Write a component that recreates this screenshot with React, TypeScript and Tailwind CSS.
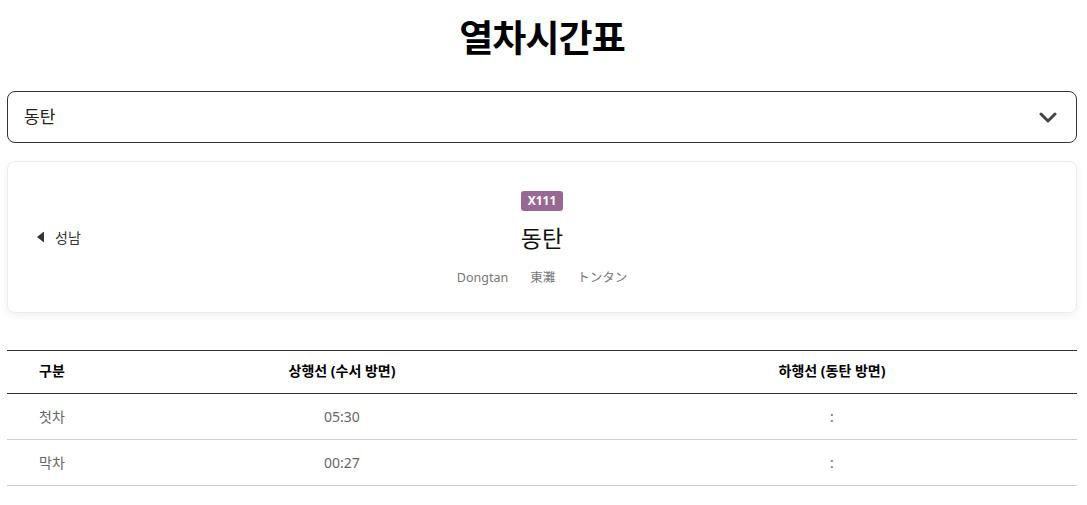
const rows = [
  { label: "첫차", up: "05:30", down: ":" },
  { label: "막차", up: "00:27", down: ":" },
];

export default function App() {
  return (
    <div className="min-h-screen bg-white font-['Noto_Sans','Noto_Sans_CJK_KR',sans-serif] text-[#111]">
      <div className="pl-[7px] pr-[10px]">
        {/* Title */}
        <h1 className="pt-[14px] text-center text-[37px] font-bold leading-[48px] tracking-tight text-black">
          열차시간표
        </h1>

        {/* Station select */}
        <div className="mt-[29px] flex h-[52px] items-center justify-between rounded-lg border border-[#333] pl-4 pr-[19px]">
          <span className="text-[17px] text-[#222]">동탄</span>
          <svg width="18" height="11" viewBox="0 0 18 11" fill="none">
            <path d="M2 2 L9 9 L16 2" stroke="#444" strokeWidth="3" strokeLinecap="round" strokeLinejoin="round" />
          </svg>
        </div>

        {/* Station card */}
        <div className="relative mt-[18px] flex h-[152px] flex-col items-center justify-center rounded-lg border border-[#ececec] bg-white pt-[5px] shadow-[0_3px_8px_rgba(0,0,0,0.06)]">
          <button className="absolute left-[29px] top-1/2 flex -translate-y-1/2 items-center gap-[11px] text-[14px] text-[#333]">
            <svg width="7" height="11" viewBox="0 0 7 11">
              <path d="M7 0 L0 5.5 L7 11 Z" fill="#333" />
            </svg>
            성남
          </button>
          <span className="rounded-[3px] bg-[#976893] px-[7px] text-[12px] font-bold leading-[20px] text-white">
            X111
          </span>
          <div className="mt-[11px] text-[23px] leading-[32px] text-[#111]">동탄</div>
          <div className="mt-[15px] flex gap-[22px] text-[12.5px] text-[#777]">
            <span>Dongtan</span>
            <span>東灘</span>
            <span>トンタン</span>
          </div>
        </div>

        {/* Timetable */}
        <table className="mt-[37px] w-full table-fixed border-collapse text-[14px]">
          <colgroup>
            <col className="w-[90px]" />
            <col className="w-[490px]" />
            <col />
          </colgroup>
          <thead>
            <tr className="h-[43px] border-y border-[#333]">
              <th className="pb-[3px] font-bold text-black">구분</th>
              <th className="pb-[3px] font-bold text-black">상행선 (수서 방면)</th>
              <th className="pb-[3px] font-bold text-black">하행선 (동탄 방면)</th>
            </tr>
          </thead>
          <tbody>
            {rows.map((r) => (
              <tr key={r.label} className="h-[46px] border-b border-[#cfcfcf] text-center text-[#666]">
                <td>{r.label}</td>
                <td>{r.up}</td>
                <td>{r.down}</td>
              </tr>
            ))}
          </tbody>
        </table>
      </div>
    </div>
  );
}
